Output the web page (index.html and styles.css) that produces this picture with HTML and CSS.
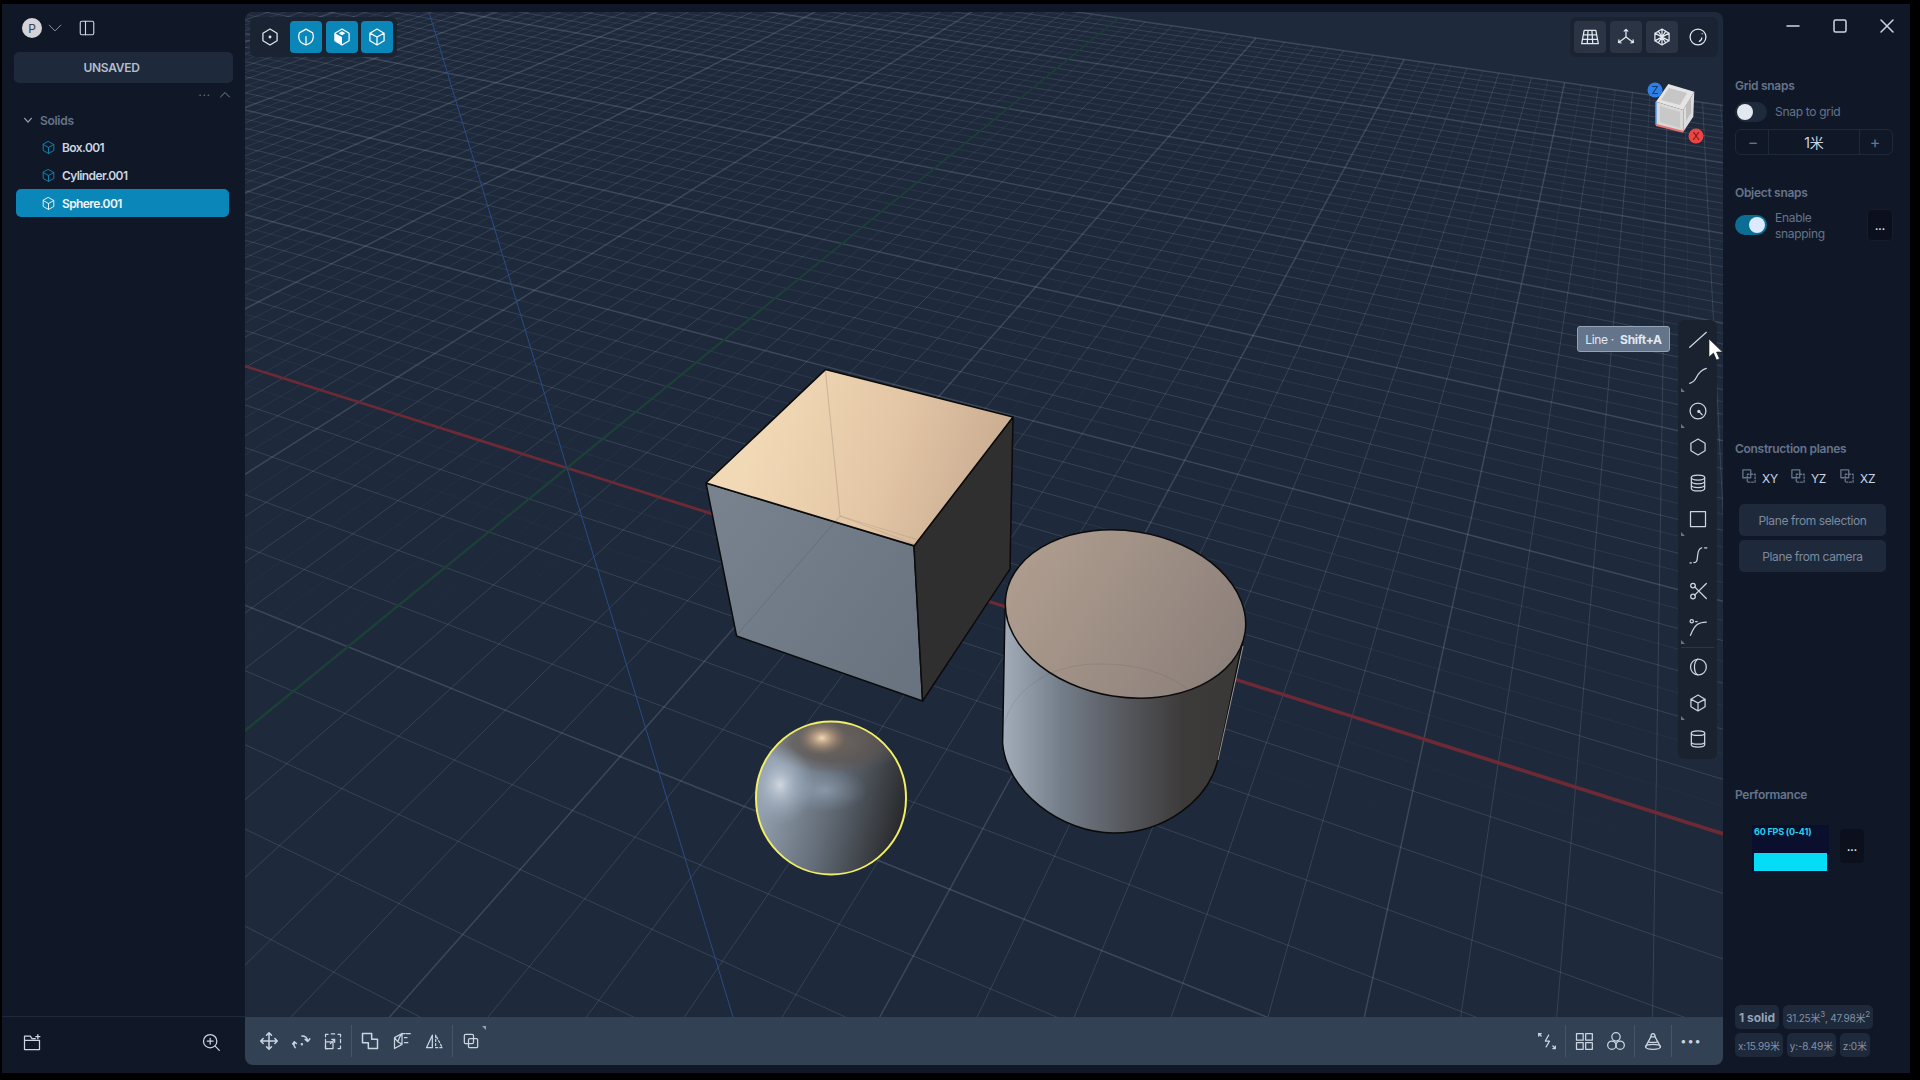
FILE: index.html
```html
<!DOCTYPE html>
<html lang="en">
<head>
<meta charset="utf-8">
<title>Plasticity</title>
<link rel="stylesheet" href="styles.css">
</head>
<body>
<div class="app">
  <aside class="left">
    <div class="lhead">
      <span class="avatar">P</span>
      <svg class="ic i14" viewBox="0 0 24 24"><path d="M2 7l10 10L22 7"/></svg>
      <svg class="ic i18 panelbtn" viewBox="0 0 24 24"><rect x="3" y="3" width="18" height="18" rx="2"/><path d="M10 3v18"/></svg>
    </div>
    <div class="docname">UNSAVED</div>
    <div class="outline-tools">
      <span class="dots3">···</span>
      <svg class="ic i12" viewBox="0 0 24 24"><path d="M3 16l9-9 9 9"/></svg>
    </div>
    <div class="group"><svg class="ic i10 strong" viewBox="0 0 24 24"><path d="M4 8l8 9 8-9"/></svg>Solids</div>
    <div class="row"><svg class="ic i15 solid" viewBox="0 0 24 24"><path d="M12 2.5l8.5 4.7v9.6L12 21.5l-8.5-4.7V7.200zM3.500 7.200L12 12l8.500-4.800M12 12v9.500"/></svg>Box.001</div>
    <div class="row"><svg class="ic i15 solid" viewBox="0 0 24 24"><path d="M12 2.5l8.5 4.7v9.6L12 21.5l-8.5-4.7V7.200zM3.500 7.200L12 12l8.500-4.800M12 12v9.500"/></svg>Cylinder.001</div>
    <div class="row selected"><svg class="ic i15" viewBox="0 0 24 24"><path d="M12 2.5l8.5 4.7v9.6L12 21.5l-8.5-4.7V7.200zM3.500 7.200L12 12l8.500-4.800M12 12v9.500"/></svg>Sphere.001</div>
    <div class="lfoot">
      <svg class="ic i20" viewBox="0 0 24 24"><path d="M3 21V5h7l2 3h4M3 10h18v11H3M19 3v5M16.500 5.500h5"/></svg>
      <svg class="ic i20" viewBox="0 0 24 24"><circle cx="11" cy="11" r="8"/><path d="M17 17l5 5M11 7.500v7M7.500 11h7"/></svg>
    </div>
  </aside>

  <main class="view">
    <div class="stage">
      <canvas id="grid" class="layer" width="1478" height="1005"></canvas>
      <svg class="layer scene" viewBox="245 12 1478 1005">
        <defs>
          <linearGradient id="cubeTop" gradientUnits="userSpaceOnUse" x1="760" y1="420" x2="1010" y2="500"><stop offset="0" stop-color="#f2d9b6"/><stop offset=".5" stop-color="#e3c6a5"/><stop offset="1" stop-color="#c6a88f"/></linearGradient>
          <linearGradient id="cubeLeft" gradientUnits="userSpaceOnUse" x1="706" y1="500" x2="920" y2="640"><stop offset="0" stop-color="#79838f"/><stop offset="1" stop-color="#6a7480"/></linearGradient>
          <linearGradient id="cylTop" gradientUnits="userSpaceOnUse" x1="1005" y1="560" x2="1246" y2="660"><stop offset="0" stop-color="#b09e8f"/><stop offset="1" stop-color="#8b7f7a"/></linearGradient>
          <linearGradient id="cylBody" gradientUnits="userSpaceOnUse" x1="1002" y1="0" x2="1242" y2="0"><stop offset="0" stop-color="#a3aeba"/><stop offset=".25" stop-color="#737d89"/><stop offset=".48" stop-color="#5a5c63"/><stop offset=".75" stop-color="#3d3b3a"/><stop offset="1" stop-color="#393836"/></linearGradient>
          <linearGradient id="sphBase" gradientUnits="userSpaceOnUse" x1="765" y1="800" x2="905" y2="835"><stop offset="0" stop-color="#919eac"/><stop offset=".45" stop-color="#626b76"/><stop offset="1" stop-color="#232324"/></linearGradient>
          <radialGradient id="sphTop"><stop offset="0" stop-color="#6d635c"/><stop offset=".6" stop-color="#5d5652" stop-opacity=".75"/><stop offset="1" stop-color="#5d5652" stop-opacity="0"/></radialGradient>
          <radialGradient id="sphWarm"><stop offset="0" stop-color="#f5d9b4"/><stop offset=".45" stop-color="#b59a80" stop-opacity=".75"/><stop offset="1" stop-color="#8a7867" stop-opacity="0"/></radialGradient>
          <radialGradient id="sphCool"><stop offset="0" stop-color="#cfd6df"/><stop offset=".5" stop-color="#a5b2c2" stop-opacity=".65"/><stop offset="1" stop-color="#8fa0b4" stop-opacity="0"/></radialGradient>
          <radialGradient id="sphBlue"><stop offset="0" stop-color="#a3b4c8" stop-opacity=".55"/><stop offset="1" stop-color="#8fa3ba" stop-opacity="0"/></radialGradient>
          <clipPath id="sphClip"><ellipse cx="831" cy="798" rx="75" ry="76.500"/></clipPath>
        </defs>

        <path class="edge" fill="url(#cubeLeft)" d="M706 483L914 546 922.600 701 736.600 636z"/>
        <path class="edge" fill="#2f2f2f" d="M1013 417L914 546 922.600 701 1010 569z"/>
        <path class="edge" fill="url(#cubeTop)" d="M825.400 369.600L1013 417 914.200 545.700 706 483z"/>
        <path class="ghost" d="M825.400 370L840 516M840 516L737 635"/>
        <path class="ghost faint" d="M840 516L914 544M840 516L1010 568"/>

        <path class="edge" fill="url(#cylBody)" d="M1005 610L1002.600 743C1006 790 1060 833 1114 833C1165 833 1208 800 1217.700 760.700L1243 640z"/>
        <path class="rim" d="M1243 646L1218 760"/>
        <ellipse class="edge" fill="url(#cylTop)" cx="1125.500" cy="614" rx="121" ry="83" transform="rotate(9 1125.500 614)"/>
        <path class="ghost faint" d="M1004 725C1012 690 1050 663 1101 664C1150 664 1190 680 1216 720"/>

        <g clip-path="url(#sphClip)">
          <ellipse cx="831" cy="798" rx="75" ry="76.500" fill="url(#sphBase)"/>
          <ellipse cx="835" cy="742" rx="72" ry="32" fill="url(#sphTop)"/>
          <ellipse cx="822" cy="738" rx="24" ry="17" fill="url(#sphWarm)"/>
          <ellipse cx="780" cy="785" rx="34" ry="40" fill="url(#sphCool)"/>
          <ellipse cx="825" cy="790" rx="42" ry="22" fill="url(#sphBlue)"/>
        </g>
        <ellipse class="halo" cx="831" cy="798" rx="75" ry="76.500"/>

        <path fill="#e4e4e4" d="M1668.300 84L1694.300 91.700 1683.300 110 1656 101.700z"/>
        <path fill="#d8d8d8" d="M1656 101.700L1683.300 110V131.700L1656 125z"/>
        <path fill="#dcdcdc" d="M1694.300 91.700L1683.300 110V131.700L1693.300 116.700z"/>
        <path fill="#c6c6c6" d="M1669 88L1687 93 1680 105 1661 100z"/>
        <path fill="#c8c8c8" d="M1660 106L1680 112V128L1660 122z"/>
        <path fill="#bdbdbd" d="M1686 106L1691 97V113L1686 121z"/>
        <path fill="none" stroke="#5b9bea" stroke-width="1.500" d="M1656 101.700V125"/>
        <path fill="none" stroke="#e57373" stroke-width="2" d="M1656 125L1683.300 131.700"/>
        <circle cx="1655" cy="90" r="7.500" fill="#2f80e4"/>
        <circle cx="1696" cy="136" r="7.500" fill="#ef4444"/>
        <text class="navtxt navz" x="1655" y="94">Z</text>
        <text class="navtxt navx" x="1696" y="140">X</text>
      </svg>

      <div class="tbar tbar-left">
        <span class="tb"><svg class="ic i20" viewBox="0 0 24 24"><path d="M12 2.500l8.500 4.900v9.200L12 21.500l-8.500-4.900V7.400z"/><circle cx="12" cy="12" r="1" fill="currentColor"/></svg></span>
        <span class="tb on"><svg class="ic i20" viewBox="0 0 24 24"><path d="M12 2.500l8 4.600c.6 2 1 4.300.5 6.500-.6 3.500-4 6.500-8.500 8-4.500-1.500-7.900-4.500-8.500-8-.5-2.200-.1-4.500.5-6.500zM12 11.500v10"/></svg></span>
        <span class="tb on"><svg class="ic i20" viewBox="0 0 24 24"><path d="M12 2.500l8.500 4.900v9.200L12 21.500l-8.500-4.900V7.400z"/><path class="filled" d="M3.500 7.400L12 12v9.500l-8.500-4.900z"/><path class="filled" d="M8 7.500L12 5.200l4 2.300-4 2.300z"/></svg></span>
        <span class="tb on tight"><svg class="ic i20" viewBox="0 0 24 24"><path d="M12 2.500l8.500 4.900v9.200L12 21.500l-8.500-4.900V7.400zM3.500 7.400L12 12l8.500-4.600M12 12v9.500"/></svg></span>
      </div>

      <div class="tbar tbar-right">
        <span class="tb grey"><svg class="ic i20" viewBox="0 0 24 24"><path d="M5 4h14l3 16H2zM9.700 4L8.700 20M14.300 4l1 16M4 9.300h16M3 14.700h18"/></svg></span>
        <span class="tb grey"><svg class="ic i20" viewBox="0 0 24 24"><path d="M12 3v9M12 12l-8 6M12 12l8 6M9.800 5L12 2.800 14.200 5M3.500 15.500l-.500 3 3 .500M20.500 15.500l.5 3-3 .5"/></svg></span>
        <span class="tb grey"><svg class="ic i20" viewBox="0 0 24 24"><path d="M12 2.500l8.500 4.900v9.200L12 21.500l-8.500-4.900V7.400zM12 2.500v19M3.500 7.400l17 9.200M20.500 7.400l-17 9.200M7.500 5l4.500 7 4.500-7M7.500 19l4.500-7 4.500 7"/></svg></span>
        <span class="tb"><svg class="ic i20" viewBox="0 0 24 24"><circle cx="12" cy="12" r="9.500"/><path d="M16.500 13c0 2-1 3.500-3 4.200M17 8v.1"/></svg></span>
      </div>

      <div class="tooltip">Line · <b>Shift+A</b></div>

      <div class="tools">
        <span class="tool"><svg class="ic i20" viewBox="0 0 24 24"><path d="M2 22L22 4"/></svg></span>
        <span class="tool more"><svg class="ic i20" viewBox="0 0 24 24"><path d="M2 22c4-1 6-3 8-7s5-9 12-11"/></svg></span>
        <span class="tool more"><svg class="ic i20" viewBox="0 0 24 24"><circle cx="12" cy="12" r="9.500"/><circle cx="13" cy="12.500" r="1.200" fill="currentColor"/><path d="M13 12.500l4 4"/></svg></span>
        <span class="tool"><svg class="ic i20" viewBox="0 0 24 24"><path d="M12 2.500l8.500 4.900v9.200L12 21.500l-8.500-4.900V7.400z"/></svg></span>
        <span class="tool"><svg class="ic i20" viewBox="0 0 24 24"><ellipse cx="12" cy="5.500" rx="8" ry="3"/><path d="M4 5.500v13c0 1.700 3.600 3 8 3s8-1.300 8-3v-13M4 10c0 1.700 3.600 3 8 3s8-1.300 8-3M4 14.500c0 1.700 3.600 3 8 3s8-1.300 8-3"/></svg></span>
        <span class="tool more"><svg class="ic i20" viewBox="0 0 24 24"><rect x="3" y="3" width="18" height="18"/></svg></span>
        <span class="tool"><svg class="ic i20" viewBox="0 0 24 24"><path d="M7 21c4 0 4-3 4.500-8S13 4 16.500 3.500M2.500 21.500h1.500M20 3.500h2.500"/></svg></span>
        <span class="tool"><svg class="ic i20" viewBox="0 0 24 24"><path d="M22 3L8 17M22 21L8 7"/><circle cx="6" cy="5.500" r="2.800"/><circle cx="6" cy="18.500" r="2.800"/></svg></span>
        <span class="tool more"><svg class="ic i20" viewBox="0 0 24 24"><path d="M3 22c1.500-4 4-10 8-13s6-3 11-3"/><circle cx="4.500" cy="5" r="2"/><path d="M9 5.500h2"/></svg></span>
        <span class="tooldiv"></span>
        <span class="tool"><svg class="ic i20" viewBox="0 0 24 24"><circle cx="12.500" cy="12" r="9.500"/><path d="M11.500 2.600C6.500 6 6.500 18 11.500 21.400"/></svg></span>
        <span class="tool more"><svg class="ic i20" viewBox="0 0 24 24"><path d="M12 2.500l8.500 4.900v9.200L12 21.500l-8.500-4.900V7.400zM3.500 7.400L12 12l8.500-4.600M12 12v9.500"/></svg></span>
        <span class="tool"><svg class="ic i20" viewBox="0 0 24 24"><ellipse cx="12" cy="5" rx="8" ry="2.700"/><path d="M4 5v14c0 1.500 3.600 2.700 8 2.700s8-1.200 8-2.700V5M4 15.500c0 1.500 3.600 2.700 8 2.700s8-1.200 8-2.700"/></svg></span>
      </div>
    </div>

    <div class="bottombar">
      <div class="bb-group">
        <svg class="ic i20 thick" viewBox="0 0 24 24"><path d="M12 2v20M2 12h20M9 5l3-3 3 3M9 19l3 3 3-3M5 9l-3 3 3 3M19 9l3 3-3 3"/></svg>
        <svg class="ic i20 thick" viewBox="0 0 24 24"><path d="M5 20c-1.500-2-2-4-1-6M2 15.500L4 13l2.500 2M13 6c4 0 6.500 2 7 6M17 10l3 2.500 2.500-3"/><circle cx="13" cy="16" r=".6"/></svg>
        <svg class="ic i20" viewBox="0 0 24 24"><path d="M3 7V4h3M10 3.500h4M18 4h3v3M21 10v4M21 18v3h-3M6 21H3v-3M3 10v2"/><rect x="3" y="13" width="9" height="8"/><path d="M9 15l5-5M10.500 10H14v3.500"/></svg>
        <span class="bb-div"></span>
        <svg class="ic i20 thick" viewBox="0 0 24 24"><path d="M3 3h11v7h7v11H10v-7H3z"/></svg>
        <svg class="ic i20" viewBox="0 0 24 24"><path d="M3 8l9-5v13l-9 5zM3 8l4 5 5 3M12 3l3.500 0M17 3h5M15 8h3M15 14h4M12 3c-1 1-4 7-5 10"/></svg>
        <svg class="ic i20" viewBox="0 0 24 24"><path d="M10 5v15H3z"/><path stroke-dasharray="2.500 2.500" d="M14 5v15h8z"/></svg>
        <span class="bb-div"></span>
        <span class="dup"><svg class="ic i20" viewBox="0 0 24 24"><rect x="4" y="4" width="11" height="11" rx="1.500"/><rect x="9" y="9" width="11" height="11" rx="1.500"/></svg></span>
      </div>
      <div class="bb-group">
        <svg class="ic i20" viewBox="0 0 24 24"><path d="M2 3l3 3M2 6V3h3M22 21l-3-3M22 18v3h-3M14 5l-4 7h5l-4 7"/></svg>
        <span class="bb-div"></span>
        <svg class="ic i20" viewBox="0 0 24 24"><rect x="3" y="3" width="8" height="8"/><rect x="14" y="3" width="8" height="8"/><rect x="3" y="14" width="8" height="8"/><rect x="14" y="14" width="8" height="8"/></svg>
        <svg class="ic i20" viewBox="0 0 24 24"><circle cx="12" cy="7" r="5"/><circle cx="7" cy="17" r="5"/><circle cx="17" cy="17" r="5"/></svg>
        <span class="bb-div"></span>
        <svg class="ic i20" viewBox="0 0 24 24"><path d="M9.500 7L3 19M14.500 7L21 19"/><ellipse cx="12" cy="19" rx="9" ry="3"/><path d="M9.500 7c0-5 5-5 5 0zM6.500 13c2 1 9 1 11 0"/></svg>
        <span class="bb-div"></span>
        <span class="bb-more">•••</span>
      </div>
    </div>
  </main>

  <aside class="right">
    <div class="win">
      <svg class="ic i16" viewBox="0 0 16 16"><path d="M2 8h12"/></svg>
      <svg class="ic i16" viewBox="0 0 16 16"><rect x="2" y="2" width="12" height="12" rx="1.500"/></svg>
      <svg class="ic i16" viewBox="0 0 16 16"><path d="M2 2l12 12M14 2L2 14"/></svg>
    </div>
    <div class="rbody">
      <h3 class="title first">Grid snaps</h3>
      <div class="toggle-row">
        <span class="toggle"><span class="knob"></span></span>
        <span class="muted">Snap to grid</span>
      </div>
      <div class="stepper"><span class="st-btn">−</span><span class="st-val">1米</span><span class="st-btn">+</span></div>

      <h3 class="title obj">Object snaps</h3>
      <div class="toggle-row snap2">
        <span class="toggle is-on"><span class="knob"></span></span>
        <span class="muted two">Enable snapping</span>
        <span class="mini">...</span>
      </div>

      <h3 class="title planes">Construction planes</h3>
      <div class="plane-row">
        <span class="pl"><svg class="ic i14 dim" viewBox="0 0 16 16"><rect x="1" y="1" width="9" height="9"/><path stroke-dasharray="2 2" d="M6 6h9v9H6z"/></svg>XY</span>
        <span class="pl"><svg class="ic i14 dim" viewBox="0 0 16 16"><rect x="1" y="1" width="9" height="9"/><path stroke-dasharray="2 2" d="M6 6h9v9H6z"/></svg>YZ</span>
        <span class="pl"><svg class="ic i14 dim" viewBox="0 0 16 16"><rect x="1" y="1" width="9" height="9"/><path stroke-dasharray="2 2" d="M6 6h9v9H6z"/></svg>XZ</span>
      </div>
      <div class="plane-btn">Plane from selection</div>
      <div class="plane-btn">Plane from camera</div>

      <h3 class="title perf">Performance</h3>
      <div class="fps-row">
        <div class="fps"><span class="fps-text">60 FPS (0-41)</span><span class="fps-bar"></span></div>
        <span class="mini fpsmini">...</span>
      </div>

      <div class="chips">
        <div class="chip-row"><span class="chip strong-chip">1 solid</span><span class="chip">31.25米<sup>3</sup>, 47.98米<sup>2</sup></span></div>
        <div class="chip-row"><span class="chip">x:15.99米</span><span class="chip">y:-8.49米</span><span class="chip">z:0米</span></div>
      </div>
    </div>
  </aside>
</div>
<svg class="cursor" viewBox="0 0 16 24"><path d="M1 1v18l4.500-4 3 7 3-1.300-3-6.700h6z"/></svg>
<script src="scene.js"></script>
</body>
</html>
```

FILE: styles.css
```css
* { box-sizing: border-box; }
html, body { margin: 0; height: 100%; background: #000; overflow: hidden; }
body {
  font-family: Inter, "Noto Sans CJK SC", sans-serif;
  font-size: 12px;
  color: #cbd5e1;
}
.app {
  display: flex;
  height: 1069px;
  margin: 4px 10px 0 2px;
  background: #101828;
}

/* icons */
.ic { fill: none; stroke: currentColor; stroke-width: 1.5; stroke-linecap: round; stroke-linejoin: round; flex: none; display: block; }
.ic .filled { fill: currentColor; stroke: none; }
.i10 { width: 10px; height: 10px; }
.i12 { width: 12px; height: 12px; }
.i14 { width: 14px; height: 14px; }
.i15 { width: 15px; height: 15px; }
.i16 { width: 16px; height: 16px; }
.i18 { width: 18px; height: 18px; }
.i20 { width: 20px; height: 20px; }
.thick { stroke-width: 1.8; }
.strong { stroke-width: 3; }
.solid { color: #0e86b4; }
.dim { color: #64748b; }

/* left */
.left { width: 243px; flex: none; display: flex; flex-direction: column; padding: 0 12px; position: relative; }
.lhead { height: 48px; display: flex; align-items: center; gap: 6px; padding-left: 8px; color: #94a3b8; }
.panelbtn { margin-left: 10px; color: #cbd5e1; }
.avatar { width: 20px; height: 20px; border-radius: 50%; background: #d4d4d8; color: #334155; display: flex; align-items: center; justify-content: center; font-size: 12px; }
.docname { height: 31px; background: #1e293b; border-radius: 5px; display: flex; align-items: center; justify-content: center; font-weight: 600; color: #b4becb; padding-right: 24px; letter-spacing: -.3px; }
.outline-tools { height: 16px; margin-top: 4px; margin-right: 2px; display: flex; align-items: center; justify-content: flex-end; gap: 8px; color: #94a3b8; }
.dots3 { font-size: 11px; letter-spacing: 1px; color: #64748b; }
.group { height: 28px; margin-top: 3px; display: flex; align-items: center; gap: 7px; padding-left: 9px; color: #64748b; font-weight: 600; letter-spacing: -.3px; }
.group .ic { color: #94a3b8; }
.row { height: 28px; margin: 0 4px 0 2px; display: flex; align-items: center; gap: 6px; padding-left: 25px; font-weight: 600; color: #cbd5e1; border-radius: 5px; letter-spacing: -.6px; }
.group + .row { margin-top: -1px; }
.selected { background: #0a86b8; color: #f1f5f9; }
.lfoot { margin: auto -12px 0; height: 57px; border-top: 1px solid #1e293b; display: flex; align-items: center; justify-content: space-between; padding: 0 24px 6px 20px; color: #cbd5e1; }

/* center */
.view { flex: 1; display: flex; flex-direction: column; padding: 8px 0; min-width: 0; }
.stage { flex: 1; position: relative; background: #1e293b; border-radius: 8px 8px 0 0; overflow: hidden; }
.layer { position: absolute; left: 0; top: 0; width: 1478px; height: 1005px; display: block; }
.edge { stroke: #0b0b0b; stroke-width: 1.500; stroke-linejoin: round; }
.ghost { fill: none; stroke: rgba(60,60,60,.2); stroke-width: 1; }
.ghost.faint { stroke: rgba(60,60,60,.12); }
.rim { fill: none; stroke: rgba(235,235,235,.6); stroke-width: 1; }
.halo { fill: none; stroke: #f2ee66; stroke-width: 2; }
.navtxt { font-size: 11px; font-weight: 500; text-anchor: middle; }
.navz { fill: #0f3a7a; }
.navx { fill: #7f1d1d; }

.tbar { position: absolute; top: 5px; height: 40px; padding: 4px; display: flex; gap: 4px; background: #1a2331; border-radius: 6px; }
.tbar-left { left: 5px; }
.tbar-right { right: 5px; }
.tb { width: 32px; height: 32px; border-radius: 4px; display: flex; align-items: center; justify-content: center; color: #e2e8f0; }
.tb.on { background: #0a86b8; color: #fff; }
.tb.tight { margin-left: -1px; }
.tb.grey { background: #2a3444; }

.tooltip { position: absolute; left: 1332px; top: 314px; width: 93px; height: 26px; display: flex; align-items: center; justify-content: center; gap: 3px; background: #64748b; border: 1px solid #94a3b8; border-radius: 3px; color: #e2e8f0; white-space: pre; font-size: 12px; letter-spacing: -.3px; }
.tools { position: absolute; left: 1433px; top: 308px; width: 39px; padding: 1px 0 2px; display: flex; flex-direction: column; background: #1a2230; border-radius: 6px; color: #cbd5e1; }
.tool { height: 36px; position: relative; display: flex; align-items: center; justify-content: center; }
.more::after { content: ""; position: absolute; left: 3px; bottom: 1px; border-left: 4px solid #64748b; border-top: 4px solid transparent; }
.tooldiv { height: 1px; margin: 2px 3px 1px; background: #2c3646; }

.bottombar { height: 48px; flex: none; background: #334155; border-radius: 0 0 8px 8px; display: flex; align-items: center; justify-content: space-between; padding: 0 21px 0 14px; color: #cbd5e1; }
.bb-group { display: flex; align-items: center; gap: 12px; }
.bb-div { width: 1px; height: 32px; background: #475569; margin: 0 -4px; }
.dup { position: relative; display: block; }
.dup::after { content: ""; position: absolute; right: -5px; top: -5px; border-right: 4px solid #94a3b8; border-bottom: 4px solid transparent; }
.bb-more { font-size: 11px; letter-spacing: 1px; width: 22px; text-align: center; color: #cbd5e1; }

/* right */
.right { width: 187px; flex: none; display: flex; flex-direction: column; }
.win { height: 44px; display: flex; align-items: center; justify-content: flex-end; gap: 31px; padding-right: 15px; color: #cbd5e1; }
.rbody { flex: 1; padding: 0 17px 16px 12px; display: flex; flex-direction: column; min-height: 0; }
.title { margin: 0; font-size: 12px; line-height: 16px; font-weight: 600; color: #64748b; letter-spacing: -.3px; }
.first { margin-top: 30px; }
.obj { margin-top: 30px; }
.planes { margin-top: 200px; }
.perf { margin-top: 215px; }
.toggle-row { display: flex; align-items: center; gap: 8px; height: 20px; margin-top: 8px; }
.snap2 { height: 32px; margin-top: 8px; }
.toggle { width: 32px; height: 20px; border-radius: 10px; background: #1e293b; padding: 2px; flex: none; display: flex; }
.knob { width: 16px; height: 16px; border-radius: 50%; background: #e2e8f0; }
.is-on { background: #0c6e92; justify-content: flex-end; }
.is-on .knob { background: #dbeafe; }
.muted { color: #64748b; font-size: 12px; letter-spacing: -.3px; position: relative; top: -1px; }
.two { width: 60px; line-height: 16px; top: 1px; }
.mini { width: 26px; height: 32px; border-radius: 4px; background: #0b101c; border: 1px solid #151d2d; display: flex; align-items: center; justify-content: center; color: #e2e8f0; font-weight: 700; font-size: 10px; margin-left: auto; padding-top: 2px; }
.stepper { height: 26px; margin-top: 7px; border: 1px solid #1e293b; border-radius: 6px; display: flex; align-items: stretch; }
.st-btn { width: 33px; flex: none; display: flex; align-items: center; justify-content: center; font-size: 16px; color: #64748b; }
.st-btn:first-child { border-right: 1px solid #1e293b; padding-left: 2px; }
.st-btn:last-child { border-left: 1px solid #1e293b; padding-right: 2px; }
.st-val { flex: 1; display: flex; align-items: center; justify-content: center; font-size: 14px; color: #cbd5e1; }
.plane-row { display: flex; margin-top: 13px; padding-left: 7px; height: 16px; gap: 15px; }
.pl { display: flex; gap: 6px; width: 34px; align-items: flex-end; color: #cbd5e1; font-size: 12px; letter-spacing: -.3px; }
.pl .ic { margin-bottom: 3px; }
.plane-btn { height: 32px; margin: 4px 7px 0 4px; background: #1e293b; border-radius: 5px; display: flex; align-items: center; justify-content: center; color: #7c8a9e; font-size: 12px; letter-spacing: -.4px; }
.plane-row + .plane-btn { margin-top: 18px; }
.fps-row { display: flex; align-items: flex-start; margin-top: 22px; padding-left: 17px; }
.fps { width: 77px; height: 48px; background: #0a0f2e; display: flex; flex-direction: column; justify-content: space-between; padding: 1px 2px 2px; }
.fps-text { font-size: 9px; font-weight: 700; line-height: 11px; color: #22d3ee; letter-spacing: -.2px; }
.fps-bar { height: 18px; background: #05dcf5; }
.fpsmini { margin-left: 11px; margin-top: 4px; width: 24px; height: 34px; background: #0b101c; border: 0; }
.chips { margin-top: auto; display: flex; flex-direction: column; gap: 4px; margin-right: -3px; }
.chip-row { display: flex; gap: 4px; }
.chip { height: 24px; padding: 0 3px; display: flex; align-items: center; background: #1e293b; border-radius: 5px; color: #8391a5; font-size: 10px; white-space: pre; letter-spacing: -.2px; }
.chip sup { font-size: 8px; line-height: 1; align-self: center; transform: translateY(-3px); }
.strong-chip { font-size: 12px; font-weight: 700; color: #94a3b8; padding: 0 4px; letter-spacing: 0; }

.cursor { position: absolute; left: 1708px; top: 338px; width: 16px; height: 24px; fill: #fff; stroke: #222; stroke-width: .6; }
```

FILE: scene.js
```js
(function () {
  var canvas = document.getElementById('grid');
  var ctx = canvas.getContext('2d');
  ctx.translate(-245, -12);

  function P(X, Y) {
    var w = 1 - 0.0725 * X + 0.165 * Y;
    return { w: w, x: (567 + 182.4 * X + 276.5 * Y) / w, y: (468 + 36.8 * X - 72 * Y) / w };
  }

  var YMAX = 6, YMIN = -6, XMIN = -14, XMAX = 13;

  function seg(a, b, style, width) {
    if (a.w < 0.05 || b.w < 0.05) return;
    ctx.strokeStyle = style;
    ctx.lineWidth = width;
    ctx.lineCap = 'round';
    ctx.beginPath();
    ctx.moveTo(a.x, a.y);
    ctx.lineTo(b.x, b.y);
    ctx.stroke();
  }

  function fadeFine(spacing) {
    return Math.max(0, Math.min(1, (30 - spacing) / 12));
  }

  var i, t, a, b, s, step = 0.25, al;
  ctx.lineCap = 'butt';

  // finest lines, fading out where the cells grow large near the camera
  function fine(px, py, nx, ny) {
    a = P(px, py);
    if (a.w < 0.05) return;
    var n = P(px + nx, py + ny);
    s = Math.hypot(n.x - a.x, n.y - a.y);
    al = fadeFine(s);
    if (al > 0.02) {
      ctx.strokeStyle = 'rgba(148,163,184,' + (0.13 * al) + ')';
      ctx.lineWidth = 1;
      b = nx ? P(px, py + step) : P(px + step, py);
      if (b.w < 0.05) return;
      ctx.beginPath();
      ctx.moveTo(a.x, a.y);
      ctx.lineTo(b.x, b.y);
      ctx.stroke();
    }
  }
  for (i = XMIN * 10; i <= XMAX * 10; i++) {
    if (i % 2 === 0) continue;
    for (t = YMIN; t < YMAX; t += step) fine(i / 10, t, 0.1, 0);
  }
  for (i = YMIN * 10; i < YMAX * 10; i++) {
    if (i % 2 === 0) continue;
    for (t = XMIN; t < XMAX; t += step) fine(t, i / 10, 0, 0.1);
  }

  function lineX(X, style, width) {
    ctx.strokeStyle = style; ctx.lineWidth = width;
    for (var u = YMIN; u < YMAX; u += step) {
      var p = P(X, u), q = P(X, u + step);
      if (p.w < 0.05 || q.w < 0.05) continue;
      ctx.beginPath(); ctx.moveTo(p.x, p.y); ctx.lineTo(q.x, q.y); ctx.stroke();
    }
  }
  function lineY(Y, style, width) {
    ctx.strokeStyle = style; ctx.lineWidth = width;
    for (var u = XMIN; u < XMAX; u += step) {
      var p = P(u, Y), q = P(u + step, Y);
      if (p.w < 0.05 || q.w < 0.05) continue;
      ctx.beginPath(); ctx.moveTo(p.x, p.y); ctx.lineTo(q.x, q.y); ctx.stroke();
    }
  }

  // fifth-of-a-cell lines
  for (i = XMIN * 5; i <= XMAX * 5; i++) { if (i % 5) lineX(i / 5, 'rgba(148,163,184,.21)', 1); }
  for (i = YMIN * 5; i <= YMAX * 5; i++) { if (i % 5) lineY(i / 5, 'rgba(148,163,184,.21)', 1); }

  // whole-cell lines
  for (i = XMIN; i <= XMAX; i++) { if (i) lineX(i, 'rgba(160,170,190,.24)', 1.5); }
  for (i = YMIN; i <= YMAX; i++) { if (i) lineY(i, 'rgba(160,170,190,.24)', 1.5); }

  // axes get thicker toward the camera
  for (t = XMIN; t < XMAX; t += step) {
    a = P(t, 0);
    seg(a, P(t + step, 0), '#6e2a34', Math.min(4, 2.8 / a.w));
  }
  for (t = YMIN; t < YMAX; t += step) {
    a = P(0, t);
    seg(a, P(0, t + step), '#1b4136', Math.min(3, 2.4 / Math.max(a.w, 1)));
  }
  ctx.strokeStyle = '#2a4c86';
  ctx.lineWidth = 1;
  ctx.beginPath();
  ctx.moveTo(429, 12);
  ctx.lineTo(567, 468);
  ctx.lineTo(733, 1017);
  ctx.stroke();
})();
```
